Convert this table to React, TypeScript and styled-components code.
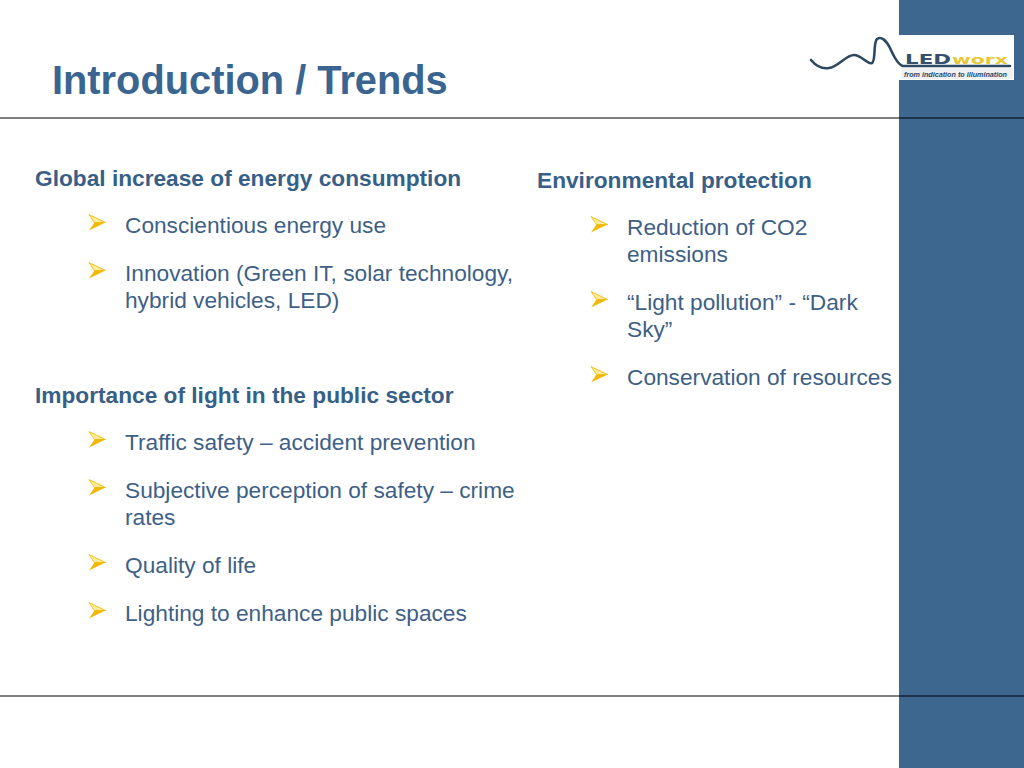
import styled, { createGlobalStyle } from 'styled-components'

const GlobalStyle = createGlobalStyle`
  html, body {
    margin: 0;
    padding: 0;
    background: #ffffff;
  }
  body {
    font-family: "Liberation Sans", Arial, sans-serif;
  }
`

interface Section {
  title: string
  items: string[]
}

const leftSections: Section[] = [
  {
    title: 'Global increase of energy consumption',
    items: ['Conscientious energy use', 'Innovation (Green IT, solar technology, hybrid vehicles, LED)'],
  },
  {
    title: 'Importance of light in the public sector',
    items: [
      'Traffic safety – accident prevention',
      'Subjective perception of safety – crime rates',
      'Quality of life',
      'Lighting to enhance public spaces',
    ],
  },
]

const rightSections: Section[] = [
  {
    title: 'Environmental protection',
    items: ['Reduction of CO2 emissions', '“Light pollution” - “Dark Sky”', 'Conservation of resources'],
  },
]

const Arrow = () => (
  <BulletIcon viewBox="0 0 18 17" width="18" height="17">
    <polygon points="1,0.6 17.6,8.5 6.5,8.5" fill="#fdeb9a" stroke="#f1c21b" strokeWidth="1" strokeLinejoin="round" />
    <polygon points="6.5,8.5 17.6,8.5 1,16.6" fill="#f3b80c" />
  </BulletIcon>
)

const Logo = () => (
  <LogoBox viewBox="0 0 208 45" width="208" height="45">
    <rect x="0" y="0" width="208" height="45" fill="#ffffff" />
    <rect x="95" y="33" width="112" height="11" fill="#eef0f2" />
    <path
      d="M5 25 C10 31, 17 34, 23 33 C32 32, 40 20, 48 20 C56 20, 61 30, 66 28 C70 26, 67 8, 71 4 C75 1, 80 5, 84 13 C88 22, 92 30, 97 31 L204 31"
      fill="none"
      stroke="#2d4861"
      strokeWidth="2.6"
      strokeLinecap="round"
      strokeLinejoin="round"
    />
    <text
      x="99"
      y="28.5"
      fontFamily="DejaVu Sans, sans-serif"
      fontWeight="bold"
      fontSize="14"
      fill="#34506c"
      textLength="46"
      lengthAdjust="spacingAndGlyphs"
    >
      LED
    </text>
    <text
      x="146"
      y="28.5"
      fontFamily="DejaVu Sans, sans-serif"
      fontWeight="bold"
      fontSize="13"
      fill="#e6c83a"
      textLength="56"
      lengthAdjust="spacingAndGlyphs"
    >
      worx
    </text>
    <text
      x="98"
      y="41.5"
      fontFamily="Liberation Sans, Arial, sans-serif"
      fontWeight="bold"
      fontStyle="italic"
      fontSize="6.8"
      fill="#2a4a6c"
      textLength="103"
      lengthAdjust="spacingAndGlyphs"
    >
      from indication to illumination
    </text>
  </LogoBox>
)

const SectionBlock = ({ section }: { section: Section }) => (
  <Block>
    <Heading>{section.title}</Heading>
    <List>
      {section.items.map((item) => (
        <Item key={item}>
          <Arrow />
          <ItemText>{item}</ItemText>
        </Item>
      ))}
    </List>
  </Block>
)

export default function App() {
  return (
    <>
      <GlobalStyle />
      <Slide>
        <Header>
          <Title>Introduction / Trends</Title>
          <Logo />
        </Header>
        <Rule />
        <Content>
          <Column>
            {leftSections.map((s) => (
              <SectionBlock key={s.title} section={s} />
            ))}
          </Column>
          <Column offset={2}>
            {rightSections.map((s) => (
              <SectionBlock key={s.title} section={s} />
            ))}
          </Column>
        </Content>
        <Rule />
        <Footer />
      </Slide>
    </>
  )
}

// Styled components
const Slide = styled.div`
  width: 1024px;
  height: 768px;
  overflow: hidden;
  display: flex;
  flex-direction: column;
  background: linear-gradient(90deg, #ffffff 899px, #3d678f 899px);
`

const Header = styled.header`
  height: 117px;
  display: flex;
  justify-content: space-between;
  align-items: flex-start;
  padding: 0 10px 0 52px;
  box-sizing: border-box;
`

const Title = styled.h1`
  margin: 57px 0 0;
  font-size: 39.8px;
  line-height: 46px;
  font-weight: bold;
  color: #3a6591;
`

const LogoBox = styled.svg`
  display: block;
  margin-top: 35px;
`

const Rule = styled.div`
  height: 2px;
  flex-shrink: 0;
  background: rgba(0, 0, 0, 0.5);
`

const Content = styled.main`
  flex: 1;
  width: 899px;
  display: grid;
  grid-template-columns: 502px 1fr;
  padding: 46px 0 0 35px;
  box-sizing: border-box;
`

const Column = styled.div<{ offset?: number }>`
  display: flex;
  flex-direction: column;
  gap: 68px;
  padding-top: ${({ offset }) => offset || 0}px;
`

const Block = styled.section`
  display: flex;
  flex-direction: column;
`

const Heading = styled.h2`
  margin: 0;
  font-size: 22.7px;
  line-height: 27px;
  font-weight: bold;
  color: #375f88;
`

const List = styled.ul`
  list-style: none;
  margin: 0;
  padding: 0 0 0 53px;
`

const Item = styled.li`
  display: flex;
  align-items: flex-start;
  gap: 19px;
  margin-top: 21px;
  font-size: 22.7px;
  line-height: 27px;
  color: #3e5f86;

  &:first-child {
    margin-top: 20px;
  }
`

const BulletIcon = styled.svg`
  flex-shrink: 0;
  margin-top: 2px;
`

const ItemText = styled.span`
  flex: 1;
`

const Footer = styled.footer`
  height: 71px;
  flex-shrink: 0;
`
